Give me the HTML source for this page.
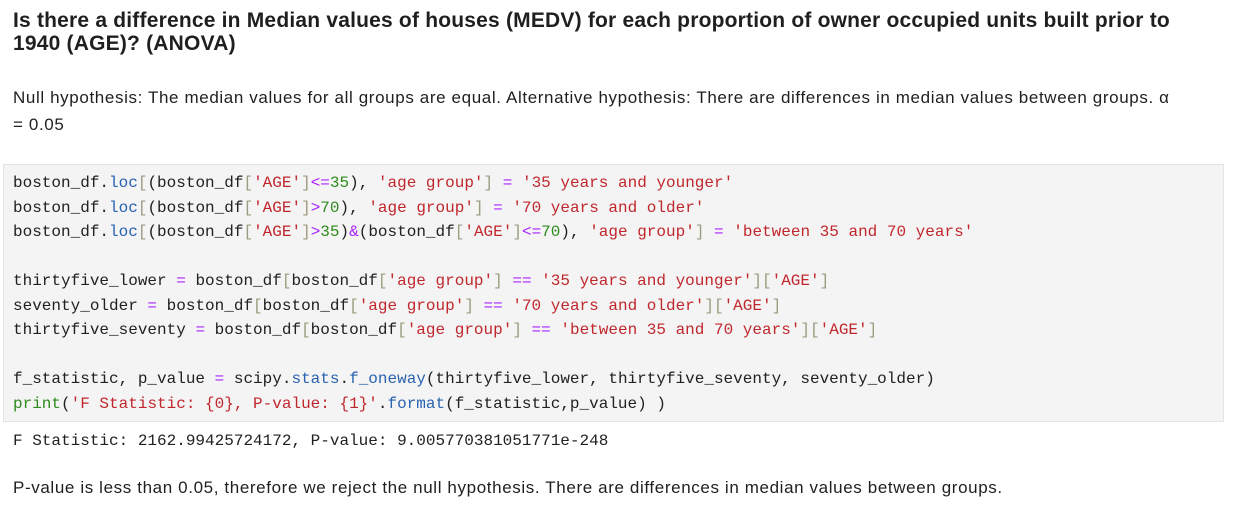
<!DOCTYPE html><html><head><style>
body{margin:0;width:1242px;height:526px;background:#fff;font-family:"Liberation Sans",sans-serif;color:#1f1f1f;position:relative;overflow:hidden}
h1{position:absolute;left:13px;top:9px;width:1200px;margin:0;font-size:21px;letter-spacing:0.2px;line-height:23px;font-weight:bold;color:#1f1f1f}
.p{position:absolute;left:13px;font-size:17px;letter-spacing:0.62px;line-height:27px;width:1178px}
.code{position:absolute;left:3px;top:164px;width:1219px;height:256px;background:#f4f4f4;border:1px solid #e3e3e3}
pre{margin:0;position:absolute;left:13px;font-family:"Liberation Mono",monospace;font-size:16px;line-height:24.5px;color:#212121}
.s{color:#c0272d}.b{color:#2a62b0}.g{color:#2e8b1e}.m{color:#aa22ff}.k{color:#9b9b80}
</style></head><body>
<h1>Is there a difference in Median values of houses (MEDV) for each proportion of owner occupied units built prior to 1940 (AGE)? (ANOVA)</h1>
<div class="p" style="top:84px">Null hypothesis: The median values for all groups are equal. Alternative hypothesis: There are differences in median values between groups. α<br>= 0.05</div>
<div class="code"></div>
<pre style="top:171px">boston_df.<span class="b">loc</span><span class="k">[</span>(boston_df<span class="k">[</span><span class="s">'AGE'</span><span class="k">]</span><span class="m">&lt;=</span><span class="g">35</span>), <span class="s">'age group'</span><span class="k">]</span> <span class="m">=</span> <span class="s">'35 years and younger'</span>
boston_df.<span class="b">loc</span><span class="k">[</span>(boston_df<span class="k">[</span><span class="s">'AGE'</span><span class="k">]</span><span class="m">&gt;</span><span class="g">70</span>), <span class="s">'age group'</span><span class="k">]</span> <span class="m">=</span> <span class="s">'70 years and older'</span>
boston_df.<span class="b">loc</span><span class="k">[</span>(boston_df<span class="k">[</span><span class="s">'AGE'</span><span class="k">]</span><span class="m">&gt;</span><span class="g">35</span>)<span class="m">&amp;</span>(boston_df<span class="k">[</span><span class="s">'AGE'</span><span class="k">]</span><span class="m">&lt;=</span><span class="g">70</span>), <span class="s">'age group'</span><span class="k">]</span> <span class="m">=</span> <span class="s">'between 35 and 70 years'</span>

thirtyfive_lower <span class="m">=</span> boston_df<span class="k">[</span>boston_df<span class="k">[</span><span class="s">'age group'</span><span class="k">]</span> <span class="m">==</span> <span class="s">'35 years and younger'</span><span class="k">][</span><span class="s">'AGE'</span><span class="k">]</span>
seventy_older <span class="m">=</span> boston_df<span class="k">[</span>boston_df<span class="k">[</span><span class="s">'age group'</span><span class="k">]</span> <span class="m">==</span> <span class="s">'70 years and older'</span><span class="k">][</span><span class="s">'AGE'</span><span class="k">]</span>
thirtyfive_seventy <span class="m">=</span> boston_df<span class="k">[</span>boston_df<span class="k">[</span><span class="s">'age group'</span><span class="k">]</span> <span class="m">==</span> <span class="s">'between 35 and 70 years'</span><span class="k">][</span><span class="s">'AGE'</span><span class="k">]</span>

f_statistic, p_value <span class="m">=</span> scipy.<span class="b">stats</span>.<span class="b">f_oneway</span>(thirtyfive_lower, thirtyfive_seventy, seventy_older)
<span class="g">print</span>(<span class="s">'F Statistic: {0}, P-value: {1}'</span>.<span class="b">format</span>(f_statistic,p_value) )</pre>
<pre style="top:429px">F Statistic: 2162.99425724172, P-value: 9.005770381051771e-248</pre>
<div class="p" style="top:474px">P-value is less than 0.05, therefore we reject the null hypothesis. There are differences in median values between groups.</div>
</body></html>
